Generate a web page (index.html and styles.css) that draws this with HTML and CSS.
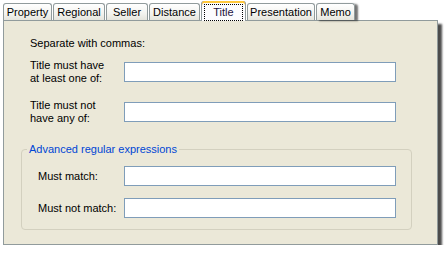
FILE: index.html
```html
<!DOCTYPE html>
<html>
<head>
<meta charset="utf-8">
<title>Title filter</title>
<link rel="stylesheet" href="styles.css">
</head>
<body>
<div class="dialog">
	<div class="tabs">
		<div class="tab tab_property">Property</div>
		<div class="tab tab_regional">Regional</div>
		<div class="tab tab_seller">Seller</div>
		<div class="tab tab_distance">Distance</div>
		<div class="tab tab_title selected"><span class="focus">Title</span></div>
		<div class="tab tab_presentation">Presentation</div>
		<div class="tab tab_memo">Memo</div>
	</div>
	<div class="panel">
		<div class="hint">Separate with commas:</div>
		<div class="rows">
			<label>Title must have<br/>at least one of:</label>
			<input type="text" class="field"/>
			<label>Title must not<br/>have any of:</label>
			<input type="text" class="field"/>
		</div>
		<fieldset class="group">
			<legend>Advanced regular expressions</legend>
			<div class="rows rows_group">
				<label>Must match:</label>
				<input type="text" class="field"/>
				<label>Must not match:</label>
				<input type="text" class="field"/>
			</div>
		</fieldset>
	</div>
</div>
</body>
</html>
```
FILE: styles.css
```css
body{
	margin:0;
	background:#fff;
	font-family:"Liberation Sans", Arial, sans-serif;
	font-size:11px;
	color:#000;
}

.dialog{
	padding-left:3px;
	width:435px;
}

/* tab strip */
.tabs{
	display:flex;
	align-items:flex-end;
	gap:1px;
	height:20px;
}
.tab{
	box-sizing:border-box;
	height:17px;
	display:flex;
	align-items:center;
	justify-content:center;
	border:1px solid #919b9c;
	border-bottom:none;
	border-radius:3px 3px 0 0;
	background:linear-gradient(#ffffff, #f3f3ef 60%, #e6e5dd);
	line-height:13px;
	white-space:nowrap;
}
.tab_property{ width:49px; }
.tab_regional{ width:52px; }
.tab_seller{ width:42px; }
.tab_distance{ width:51px; }
.tab_title{ width:45px; }
.tab_presentation{ width:68px; }
.tab_memo{ width:39px; box-shadow:3px 1px 2px rgba(0,0,0,.55); }

.tab.selected{
	height:20px;
	margin-bottom:-1px;
	position:relative;
	z-index:1;
	background:#fcfcfe;
	border-top:none;
	box-shadow:inset 0 2px 0 #ffc83c, inset 0 1px 0 #e68b2c;
	padding-top:2px;
	color:#1c1240;
}
.focus{
	border:1px dotted #000;
	padding:1px 8px;
	line-height:13px;
}

/* page */
.panel{
	box-sizing:border-box;
	height:225px;
	background:#ebe8d8;
	border:1px solid #919b9c;
	padding:16px 0 0 17px;
	box-shadow:4px 4px 2px rgba(0,0,0,.7);
}
.hint{
	line-height:13px;
	padding-left:9px;
}
.rows{
	display:grid;
	grid-template-columns:94px 272px;
	row-gap:14px;
	align-items:center;
	margin-top:9px;
	padding-left:9px;
}
.rows label{
	line-height:13px;
}
.field{
	box-sizing:border-box;
	width:272px;
	height:20px;
	margin:0;
	border:1px solid #7f9db9;
	background:#fff;
}

.group{
	box-sizing:border-box;
	width:391px;
	margin:18px 0 0 0;
	padding:10px 0 11px 16px;
	border:1px solid #d3d0bf;
	border-radius:4px;
}
.group legend{
	color:#0046d5;
	line-height:13px;
	padding:0 2px;
	margin-left:-11px;
}
.rows_group{
	grid-template-columns:86px 272px;
	row-gap:12px;
	margin-top:0;
	padding-left:0;
}
```
